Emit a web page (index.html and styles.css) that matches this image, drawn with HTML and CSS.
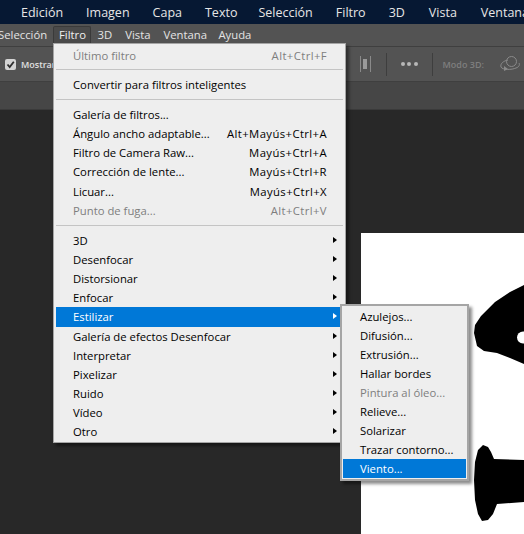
FILE: index.html
```html
<!DOCTYPE html>
<html lang="es">
<head>
<meta charset="utf-8">
<title>Filtro</title>
<link rel="stylesheet" href="styles.css">
</head>
<body>
<div class="app">
  <div class="titlebar">
    <span class="t1">Edición</span><span class="t2">Imagen</span><span class="t3">Capa</span><span class="t4">Texto</span><span class="t5">Selección</span><span class="t6">Filtro</span><span class="t7">3D</span><span class="t8">Vista</span><span class="t9">Ventana</span>
  </div>
  <div class="menubar">
    <span class="mb mb-sel">Selección</span><span class="mb mb-active">Filtro</span><span class="mb">3D</span><span class="mb">Vista</span><span class="mb">Ventana</span><span class="mb mb-last">Ayuda</span>
  </div>
  <div class="options">
    <span class="check"><svg width="9" height="9" viewBox="0 0 9 9"><path d="M1.5 4.5 L3.7 7 L7.8 1.8" fill="none" stroke="#2e2e2e" stroke-width="1.8"/></svg></span>
    <span class="mostrar">Mostrar</span>
    <span class="opt-right">
      <svg class="align" width="11" height="16" viewBox="0 0 11 16"><rect x="0" y="0" width="1" height="16" fill="#8a8a8a"/><rect x="3" y="3" width="4" height="10" fill="#9a9a9a"/><rect x="10" y="0" width="1" height="16" fill="#8a8a8a"/></svg>
      <span class="vsep sep-a"></span>
      <span class="dots"><i></i><i></i><i></i></span>
      <span class="vsep sep-b"></span>
      <span class="modo">Modo 3D:</span>
      <svg class="orbit" width="20" height="18" viewBox="0 0 20 18"><circle cx="11.500" cy="6.500" r="5" fill="none" stroke="#8a8a8a"/><path d="M8 5 C3 6 0 9 1 12 C2 15 12 15 16 13 C19 12 20 10 19 8" fill="none" stroke="#8a8a8a"/><path d="M4 11 L8 14 L4 16 Z" fill="#8a8a8a"/></svg>
    </span>
  </div>
  <div class="tabsbar"></div>
  <div class="workspace">
    <div class="doc">
      <svg class="art" width="163" height="301" viewBox="361 233 163 301">
        <path d="M524 285 L510 292 L495 302 L481 316 L475 325 L474 333 L477 346 L484 351 L497 353 L510 358 L524 364 Z" fill="#000"/>
        <circle cx="523" cy="337.500" r="6" fill="#fff"/>
        <path d="M483 445 L488 447 L491 452 L494 459 L524 460 L524 502 L497 504 L493 514 L488 520 L482 521 L478 514 L475 500 L474 480 L475 462 L478 450 Z" fill="#000"/>
      </svg>
    </div>
  </div>

  <div class="menu main-menu">
    <div class="item off"><span>Último filtro</span><span class="key">Alt+Ctrl+F</span></div>
    <div class="sep sep-1"></div>
    <div class="item"><span>Convertir para filtros inteligentes</span></div>
    <div class="sep sep-2"></div>
    <div class="item"><span>Galería de filtros...</span></div>
    <div class="item"><span>Ángulo ancho adaptable...</span><span class="key">Alt+Mayús+Ctrl+A</span></div>
    <div class="item"><span>Filtro de Camera Raw...</span><span class="key">Mayús+Ctrl+A</span></div>
    <div class="item"><span>Corrección de lente...</span><span class="key">Mayús+Ctrl+R</span></div>
    <div class="item"><span>Licuar...</span><span class="key">Mayús+Ctrl+X</span></div>
    <div class="item off"><span>Punto de fuga...</span><span class="key">Alt+Ctrl+V</span></div>
    <div class="sep sep-3"></div>
    <div class="item sub"><span>3D</span></div>
    <div class="item sub"><span>Desenfocar</span></div>
    <div class="item sub"><span>Distorsionar</span></div>
    <div class="item sub"><span>Enfocar</span></div>
    <div class="item sub hot"><span>Estilizar</span></div>
    <div class="item sub"><span>Galería de efectos Desenfocar</span></div>
    <div class="item sub"><span>Interpretar</span></div>
    <div class="item sub"><span>Pixelizar</span></div>
    <div class="item sub"><span>Ruido</span></div>
    <div class="item sub"><span>Vídeo</span></div>
    <div class="item sub"><span>Otro</span></div>
  </div>

  <div class="menu sub-menu">
    <div class="item"><span>Azulejos...</span></div>
    <div class="item"><span>Difusión...</span></div>
    <div class="item"><span>Extrusión...</span></div>
    <div class="item"><span>Hallar bordes</span></div>
    <div class="item off"><span>Pintura al óleo...</span></div>
    <div class="item"><span>Relieve...</span></div>
    <div class="item"><span>Solarizar</span></div>
    <div class="item"><span>Trazar contorno...</span></div>
    <div class="item hot"><span>Viento...</span></div>
  </div>
</div>
</body>
</html>
```
FILE: styles.css
```css
* { box-sizing: border-box; }
html, body { margin: 0; padding: 0; }
body { width: 524px; height: 534px; overflow: hidden; background: #282828; font-family: "Open Sans", "Noto Sans", sans-serif; }
.app { position: relative; width: 524px; height: 534px; display: flex; flex-direction: column; overflow: hidden; }

.titlebar { height: 24px; background: #061833; color: #e6e6e6; font-size: 12.5px; line-height: 25px; flex: none; display: flex; white-space: nowrap; padding-left: 21px; }
.t1 { margin-right: 23px; }
.t2 { margin-right: 23px; }
.t3 { margin-right: 23px; }
.t4 { margin-right: 21px; }
.t5 { margin-right: 23px; }
.t6 { margin-right: 23px; }
.t7 { margin-right: 24px; }
.t8 { margin-right: 24px; }

.menubar { height: 23px; background: #535353; color: #e4e4e4; font-size: 11.3px; line-height: 21px; flex: none; display: flex; white-space: nowrap; border-bottom: 1px solid #3f3f3f; }
.mb { padding: 0 6.500px; height: 21px; }
.mb-sel { margin-left: -2px; padding: 0; width: 55px; }
.mb-active { border: 1px solid #3a3a3a; border-bottom: 0; border-radius: 2px 2px 0 0; background: #4a4a4a; padding: 0 5px; width: 38px; height: 17px; margin-top: 2px; color: #f0f0f0; line-height: 16px; }
.mb-last { margin-left: -1.500px; }

.options { height: 35px; background: #535353; flex: none; display: flex; align-items: center; padding-left: 5px; border-bottom: 1px solid #3f3f3f; }
.check { width: 11px; height: 11px; background: #d4d4d4; border-radius: 2px; display: flex; align-items: center; justify-content: center; }
.mostrar { margin-left: 5px; color: #e0e0e0; font-size: 9px; font-weight: 600; }
.opt-right { margin-left: auto; display: flex; align-items: center; height: 100%; }
.align { margin-right: 15px; }
.vsep { width: 1px; height: 23px; background: #3e3e3e; }
.dots { display: flex; gap: 2.500px; margin: 0 14px; }
.dots i { width: 4px; height: 4px; border-radius: 50%; background: #b8b8b8; display: block; }
.modo { margin-left: 10px; color: #7f7f7f; font-size: 9px; font-weight: 600; white-space: nowrap; }
.orbit { margin: 0 4px 0 16px; }

.tabsbar { height: 28px; background: #464646; flex: none; border-bottom: 1px solid #3a3a3a; }
.workspace { flex: 1; background: #282828; padding: 123px 0 0 361px; min-height: 0; }
.doc { width: 163px; height: 301px; background: #fff; }
.art { display: block; }

.menu { position: absolute; background: #eeeeee; color: #000; font-size: 11.3px; border: 1px solid #a5a5a5; box-shadow: 3px 3px 3px rgba(0, 0, 0, .45); }
.main-menu { left: 53px; top: 43px; width: 293px; height: 400px; padding: 2px 2px 0; }
.sub-menu { left: 340px; top: 304px; width: 129px; height: 177px; padding: 1px; border-width: 2px; }
.item { height: 19px; line-height: 19px; display: flex; justify-content: space-between; padding: 0 18px 0 17px; white-space: nowrap; position: relative; }
.main-menu .item { height: 19.100px; padding-right: 16px; }
.off { color: #7e7e7e; }
.hot { background: #0078d7; color: #fff; }
.key { letter-spacing: .4px; }
.sep { height: 1px; background: #c4c4c4; }
.sep-1 { margin: 4px 0 5px; }
.sep-2 { margin: 5px 0 5px; }
.sep-3 { margin: 5px 0 5.300px; }
.sub::after { content: ""; position: absolute; right: 6px; top: 6px; border-left: 4px solid #000; border-top: 3.500px solid transparent; border-bottom: 3.500px solid transparent; }
.sub.hot::after { border-left-color: #fff; }
```
